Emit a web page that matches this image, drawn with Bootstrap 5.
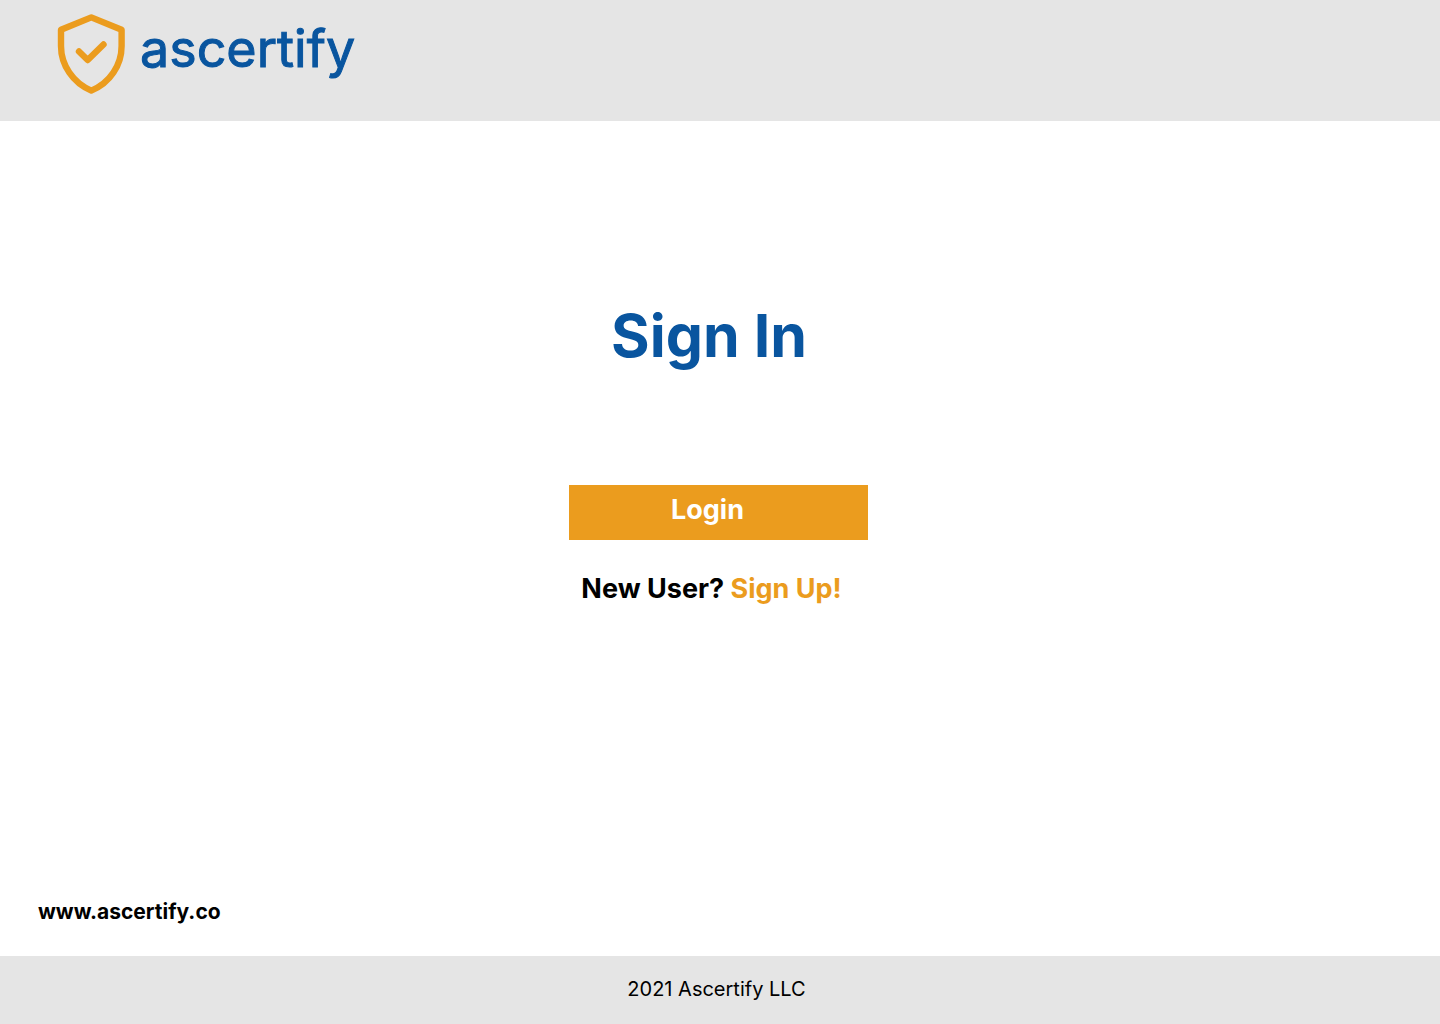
<!DOCTYPE html>
<html lang="en">
<head>
<meta charset="utf-8">
<meta name="viewport" content="width=device-width, initial-scale=1">
<title>Ascertify - Sign In</title>
<link href="https://cdn.jsdelivr.net/npm/bootstrap@5.3.0/dist/css/bootstrap.min.css" rel="stylesheet">
<style>
  :root { --brand-blue: #09559f; --brand-orange: #eb9c1e; --bar-gray: #e5e5e5; }
  body { font-family: Inter, "Open Sans", sans-serif; color: #000; }
  .site-bar { background: var(--bar-gray); }
  .site-header { padding: 14px 56px 27px; }
  .brand-link { gap: 14px; }
  .brand-name { font-size: 52px; line-height: 70px; font-weight: 400; color: var(--brand-blue); -webkit-text-stroke: 1px var(--brand-blue); }
  .site-main { padding-right: 3px; }
  .signin-panel { width: 299px; margin-top: 180px; }
  .signin-title { font-size: 59px; line-height: 70px; font-weight: 700; color: var(--brand-blue); margin-bottom: 114px; padding-right: 19px; }
  .login-btn { background: var(--brand-orange); color: #fff; font-size: 27px; line-height: 32px; font-weight: 700; padding: 9px 22px 14px 0; }
  .login-btn:hover { background: #d68b14; color: #fff; }
  .signup-line { font-size: 27px; line-height: 32px; font-weight: 700; margin-top: 33px; padding-right: 14px; }
  .signup-line a { color: var(--brand-orange); }
  .site-url { font-size: 21px; line-height: 24px; font-weight: 700; padding: 0 38px 32px; }
  .site-footer { font-size: 20px; line-height: 24px; padding: 21px 7px 23px 0; }
</style>
<script src="https://cdn.jsdelivr.net/npm/bootstrap@5.3.0/dist/js/bootstrap.bundle.min.js" defer></script>
</head>
<body class="d-flex flex-column min-vh-100 bg-white">
  <header class="site-bar site-header d-flex">
    <a href="#" class="brand-link d-flex align-items-start text-decoration-none">
      <svg width="70" height="80" viewBox="0 0 70 80" fill="none" stroke="#eb9c1e" stroke-width="6.4" stroke-linejoin="round" stroke-linecap="round" aria-hidden="true">
        <path d="M35.300 3.400L65.600 15.700V32C65.600 51 54 69 35.300 76.600C17 69 5 51 5 32V15.700Z"/>
        <path d="M23 37.500L31.700 46L47.500 30.500"/>
      </svg>
      <span class="brand-name">ascertify</span>
    </a>
  </header>
  <main class="site-main flex-grow-1 d-flex flex-column">
    <section class="signin-panel mx-auto text-center text-nowrap">
      <h1 class="signin-title">Sign In</h1>
      <button type="button" class="login-btn btn w-100 border-0 rounded-0">Login</button>
      <p class="signup-line mb-0">New User? <a href="#" class="text-decoration-none">Sign Up!</a></p>
    </section>
    <div class="site-url mt-auto"><a href="#" class="text-black text-decoration-none">www.ascertify.co</a></div>
  </main>
  <footer class="site-bar site-footer text-center">2021 Ascertify LLC</footer>
</body>
</html>
